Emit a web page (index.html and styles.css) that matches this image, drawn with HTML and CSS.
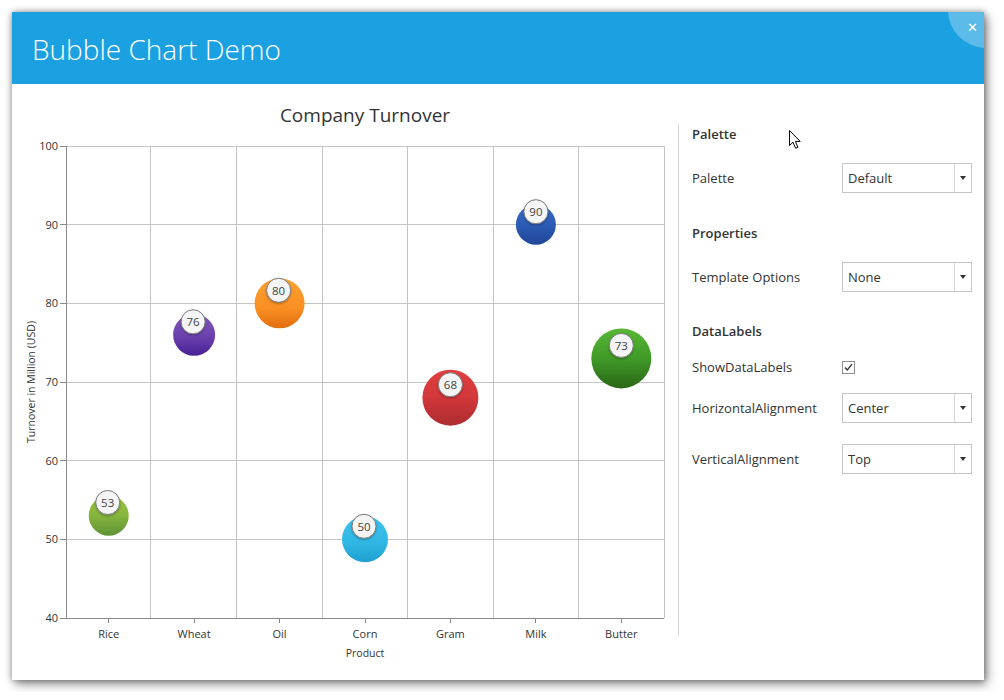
FILE: index.html
```html
<!DOCTYPE html>
<html>
<head>
<meta charset="utf-8">
<link rel="stylesheet" href="styles.css">
</head>
<body>
<div class="window">
  <header class="titlebar">
    <h1 class="title">Bubble Chart Demo</h1>
    <div class="close"><span>&#x2715;</span></div>
  </header>
  <main class="content">
    <section class="chart">
      <svg class="chart-svg" width="666" height="596" viewBox="0 0 666 596">
        <defs>
          <linearGradient id="gRice" x1="0" y1="0" x2="0" y2="1"><stop offset="0" stop-color="#9cc63f"/><stop offset="0.5" stop-color="#86b53c"/><stop offset="1" stop-color="#5d9236"/></linearGradient>
          <linearGradient id="gWheat" x1="0" y1="0" x2="0" y2="1"><stop offset="0" stop-color="#8257b8"/><stop offset="0.5" stop-color="#6c43ae"/><stop offset="1" stop-color="#4a2195"/></linearGradient>
          <linearGradient id="gOil" x1="0" y1="0" x2="0" y2="1"><stop offset="0" stop-color="#ffa031"/><stop offset="0.6" stop-color="#f98f22"/><stop offset="1" stop-color="#e26d0e"/></linearGradient>
          <linearGradient id="gCorn" x1="0" y1="0" x2="0" y2="1"><stop offset="0" stop-color="#40c2ec"/><stop offset="0.6" stop-color="#2fb6e4"/><stop offset="1" stop-color="#1e9fd0"/></linearGradient>
          <linearGradient id="gGram" x1="0" y1="0" x2="0" y2="1"><stop offset="0" stop-color="#e0403e"/><stop offset="0.5" stop-color="#d2373a"/><stop offset="1" stop-color="#ac2c30"/></linearGradient>
          <linearGradient id="gMilk" x1="0" y1="0" x2="0" y2="1"><stop offset="0" stop-color="#3569c4"/><stop offset="0.5" stop-color="#2d5cb6"/><stop offset="1" stop-color="#1f4597"/></linearGradient>
          <linearGradient id="gButter" x1="0" y1="0" x2="0" y2="1"><stop offset="0" stop-color="#58b834"/><stop offset="0.5" stop-color="#3f9a28"/><stop offset="1" stop-color="#2b6616"/></linearGradient>
          <filter id="lblShadow" x="-30%" y="-30%" width="160%" height="160%">
            <feDropShadow dx="0" dy="1" stdDeviation="1" flood-color="#000" flood-opacity="0.35"/>
          </filter>
        </defs>
        <text class="chart-title" x="353" y="38" text-anchor="middle">Company Turnover</text>

        <g class="grid">
          <line x1="54" y1="62.5" x2="652" y2="62.5"/>
          <line x1="54" y1="140.5" x2="652" y2="140.5"/>
          <line x1="54" y1="219.5" x2="652" y2="219.5"/>
          <line x1="54" y1="298.5" x2="652" y2="298.5"/>
          <line x1="54" y1="376.5" x2="652" y2="376.5"/>
          <line x1="54" y1="455.5" x2="652" y2="455.5"/>
          <line x1="138.5" y1="62" x2="138.5" y2="534"/>
          <line x1="224.5" y1="62" x2="224.5" y2="534"/>
          <line x1="310.5" y1="62" x2="310.5" y2="534"/>
          <line x1="395.5" y1="62" x2="395.5" y2="534"/>
          <line x1="481.5" y1="62" x2="481.5" y2="534"/>
          <line x1="566.5" y1="62" x2="566.5" y2="534"/>
          <line x1="652.5" y1="62" x2="652.5" y2="534"/>
        </g>
        <g class="axis">
          <line x1="54.5" y1="62" x2="54.5" y2="534.5"/>
          <line x1="54" y1="534.5" x2="652" y2="534.5"/>
          <line x1="48" y1="62.5" x2="54" y2="62.5"/>
          <line x1="48" y1="140.5" x2="54" y2="140.5"/>
          <line x1="48" y1="219.5" x2="54" y2="219.5"/>
          <line x1="48" y1="298.5" x2="54" y2="298.5"/>
          <line x1="48" y1="376.5" x2="54" y2="376.5"/>
          <line x1="48" y1="455.5" x2="54" y2="455.5"/>
          <line x1="48" y1="534.5" x2="54" y2="534.5"/>
          <line x1="96.5" y1="534" x2="96.5" y2="539"/>
          <line x1="182.5" y1="534" x2="182.5" y2="539"/>
          <line x1="267.5" y1="534" x2="267.5" y2="539"/>
          <line x1="353.5" y1="534" x2="353.5" y2="539"/>
          <line x1="438.5" y1="534" x2="438.5" y2="539"/>
          <line x1="523.5" y1="534" x2="523.5" y2="539"/>
          <line x1="609.5" y1="534" x2="609.5" y2="539"/>
        </g>
        <g class="tick-label" text-anchor="end">
          <text x="46" y="66">100</text>
          <text x="46" y="145">90</text>
          <text x="46" y="223">80</text>
          <text x="46" y="302">70</text>
          <text x="46" y="381">60</text>
          <text x="46" y="459">50</text>
          <text x="46" y="538">40</text>
        </g>
        <g class="tick-label" text-anchor="middle">
          <text x="96.7" y="554">Rice</text>
          <text x="182.1" y="554">Wheat</text>
          <text x="267.6" y="554">Oil</text>
          <text x="353" y="554">Corn</text>
          <text x="438.4" y="554">Gram</text>
          <text x="523.9" y="554">Milk</text>
          <text x="609.3" y="554">Butter</text>
        </g>
        <text class="axis-title" x="353" y="573" text-anchor="middle">Product</text>
        <text class="axis-title" transform="translate(23 298) rotate(-90)" text-anchor="middle">Turnover in Million (USD)</text>

        <g class="bubbles">
          <circle cx="96.7" cy="431.7" r="20" fill="url(#gRice)"/>
          <circle cx="182.1" cy="250.8" r="21" fill="url(#gWheat)"/>
          <circle cx="267.6" cy="219.3" r="25" fill="url(#gOil)"/>
          <circle cx="353" cy="455.3" r="23" fill="url(#gCorn)"/>
          <circle cx="438.4" cy="313.7" r="28" fill="url(#gGram)"/>
          <circle cx="523.9" cy="140.7" r="20" fill="url(#gMilk)"/>
          <circle cx="609.3" cy="274.4" r="30" fill="url(#gButter)"/>
        </g>
        <g class="labels">
          <circle cx="95.7" cy="418.5" r="12" filter="url(#lblShadow)"/><text x="95.7" y="422.8">53</text>
          <circle cx="181.1" cy="237.8" r="12" filter="url(#lblShadow)"/><text x="181.1" y="242.1">76</text>
          <circle cx="266.6" cy="206.3" r="12" filter="url(#lblShadow)"/><text x="266.6" y="210.6">80</text>
          <circle cx="352" cy="442.3" r="12" filter="url(#lblShadow)"/><text x="352" y="446.6">50</text>
          <circle cx="438.4" cy="300.7" r="12" filter="url(#lblShadow)"/><text x="438.4" y="305">68</text>
          <circle cx="523.9" cy="127.7" r="12" filter="url(#lblShadow)"/><text x="523.9" y="132">90</text>
          <circle cx="609.3" cy="261.4" r="12" filter="url(#lblShadow)"/><text x="609.3" y="265.7">73</text>
        </g>
      </svg>
    </section>
    <aside class="panel">
      <h2 class="sec first">Palette</h2>
      <div class="row">
        <span class="lbl">Palette</span>
        <div class="combo"><span class="val">Default</span><span class="arrow"></span></div>
      </div>
      <h2 class="sec">Properties</h2>
      <div class="row">
        <span class="lbl">Template Options</span>
        <div class="combo"><span class="val">None</span><span class="arrow"></span></div>
      </div>
      <h2 class="sec sec-dl">DataLabels</h2>
      <div class="row check-row">
        <span class="lbl">ShowDataLabels</span>
        <span class="checkbox">
          <svg width="11" height="11" viewBox="0 0 11 11"><path d="M2 5.5 L4.3 8 L9 2.2" fill="none" stroke="#333" stroke-width="1.3"/></svg>
        </span>
      </div>
      <div class="row r-h">
        <span class="lbl">HorizontalAlignment</span>
        <div class="combo"><span class="val">Center</span><span class="arrow"></span></div>
      </div>
      <div class="row r-v">
        <span class="lbl">VerticalAlignment</span>
        <div class="combo"><span class="val">Top</span><span class="arrow"></span></div>
      </div>
    </aside>
  </main>
  <svg class="cursor" width="13" height="20" viewBox="0 0 13 20">
    <path d="M0.5 0.5 L0.5 15.5 L4 12.2 L6.6 18.3 L8.9 17.3 L6.4 11.4 L11.2 11.4 Z" fill="#fff" stroke="#000" stroke-width="1" stroke-linejoin="round"/>
  </svg>
</div>
</body>
</html>
```

FILE: styles.css
```css
html, body {
  margin: 0;
  padding: 0;
  background: #ffffff;
}
body {
  padding: 12px;
  font-family: "Open Sans", "Noto Sans", sans-serif;
  color: #333;
}
.window {
  position: relative;
  width: 972px;
  height: 668px;
  background: #fff;
  box-shadow: 0 0 6px rgba(0,0,0,0.35), 3px 4px 10px rgba(0,0,0,0.45);
  display: flex;
  flex-direction: column;
}
.titlebar {
  position: relative;
  height: 72px;
  background: #1ba1e2;
  overflow: hidden;
  display: flex;
  align-items: center;
  flex: none;
}
.title {
  margin: 0 0 0 20px;
  font-family: "Open Sans", sans-serif;
  font-weight: 300;
  font-size: 28px;
  color: #fff;
  line-height: 1;
  padding-top: 2px;
}
.close {
  position: absolute;
  right: -40px;
  top: -40px;
  width: 76px;
  height: 76px;
  border-radius: 50%;
  background: #5dbbea;
}
.close span {
  position: absolute;
  left: 19px;
  top: 49px;
  font-size: 13px;
  font-weight: 700;
  color: #fff;
  line-height: 1;
  font-family: "DejaVu Sans", sans-serif;
}
.content {
  flex: 1;
  display: flex;
}
.chart {
  width: 666px;
  flex: none;
}
.chart-svg {
  display: block;
}
.chart-title {
  font-family: "Open Sans", sans-serif;
  font-size: 19px;
  fill: #333;
}
.grid line {
  stroke: #c4c4c4;
  stroke-width: 1;
}
.axis line {
  stroke: #8a8a8a;
  stroke-width: 1;
}
.tick-label text {
  font-family: "Open Sans", sans-serif;
  font-size: 11px;
  fill: #333;
}
.axis-title {
  font-family: "Open Sans", sans-serif;
  font-size: 10.5px;
  fill: #333;
}
.labels circle {
  fill: #f5f5f5;
  stroke: #7d7d7d;
  stroke-width: 1;
}
.labels text {
  font-family: "Open Sans", sans-serif;
  font-size: 11.5px;
  fill: #444;
  text-anchor: middle;
}
.panel {
  margin-top: 40px;
  height: 512px;
  border-left: 1px solid #d4d4d4;
  padding-left: 13px;
  box-sizing: border-box;
  width: 306px;
  font-size: 13px;
}
.sec {
  margin: 30px 0 0;
  font-size: 13px;
  font-weight: 600;
  line-height: 20px;
  color: #333;
}
.sec.first {
  margin-top: 0;
}
.sec-dl {
  margin-top: 29px;
}
.row {
  display: flex;
  align-items: center;
  margin-top: 19px;
  height: 30px;
}
.check-row {
  height: 20px;
  margin-top: 16px;
}
.r-h { margin-top: 16px; }
.r-v { margin-top: 21px; }
.lbl {
  width: 150px;
  flex: none;
  color: #333;
}
.combo {
  width: 130px;
  height: 30px;
  box-sizing: border-box;
  border: 1px solid #c6c6c6;
  display: flex;
  align-items: center;
  position: relative;
}
.val {
  flex: 1;
  padding-left: 5px;
  color: #333;
}
.arrow {
  width: 16px;
  height: 28px;
  border-left: 1px solid #d8d8d8;
  display: flex;
  align-items: center;
  justify-content: center;
}
.arrow::after {
  content: "";
  border-left: 3.5px solid transparent;
  border-right: 3.5px solid transparent;
  border-top: 4px solid #333;
}
.checkbox {
  width: 13px;
  height: 13px;
  box-sizing: border-box;
  border: 1px solid #8e8e8e;
  display: flex;
  align-items: center;
  justify-content: center;
  background: #fff;
}
.checkbox svg { display: block; }
.cursor {
  position: absolute;
  left: 777px;
  top: 118px;
}
```
